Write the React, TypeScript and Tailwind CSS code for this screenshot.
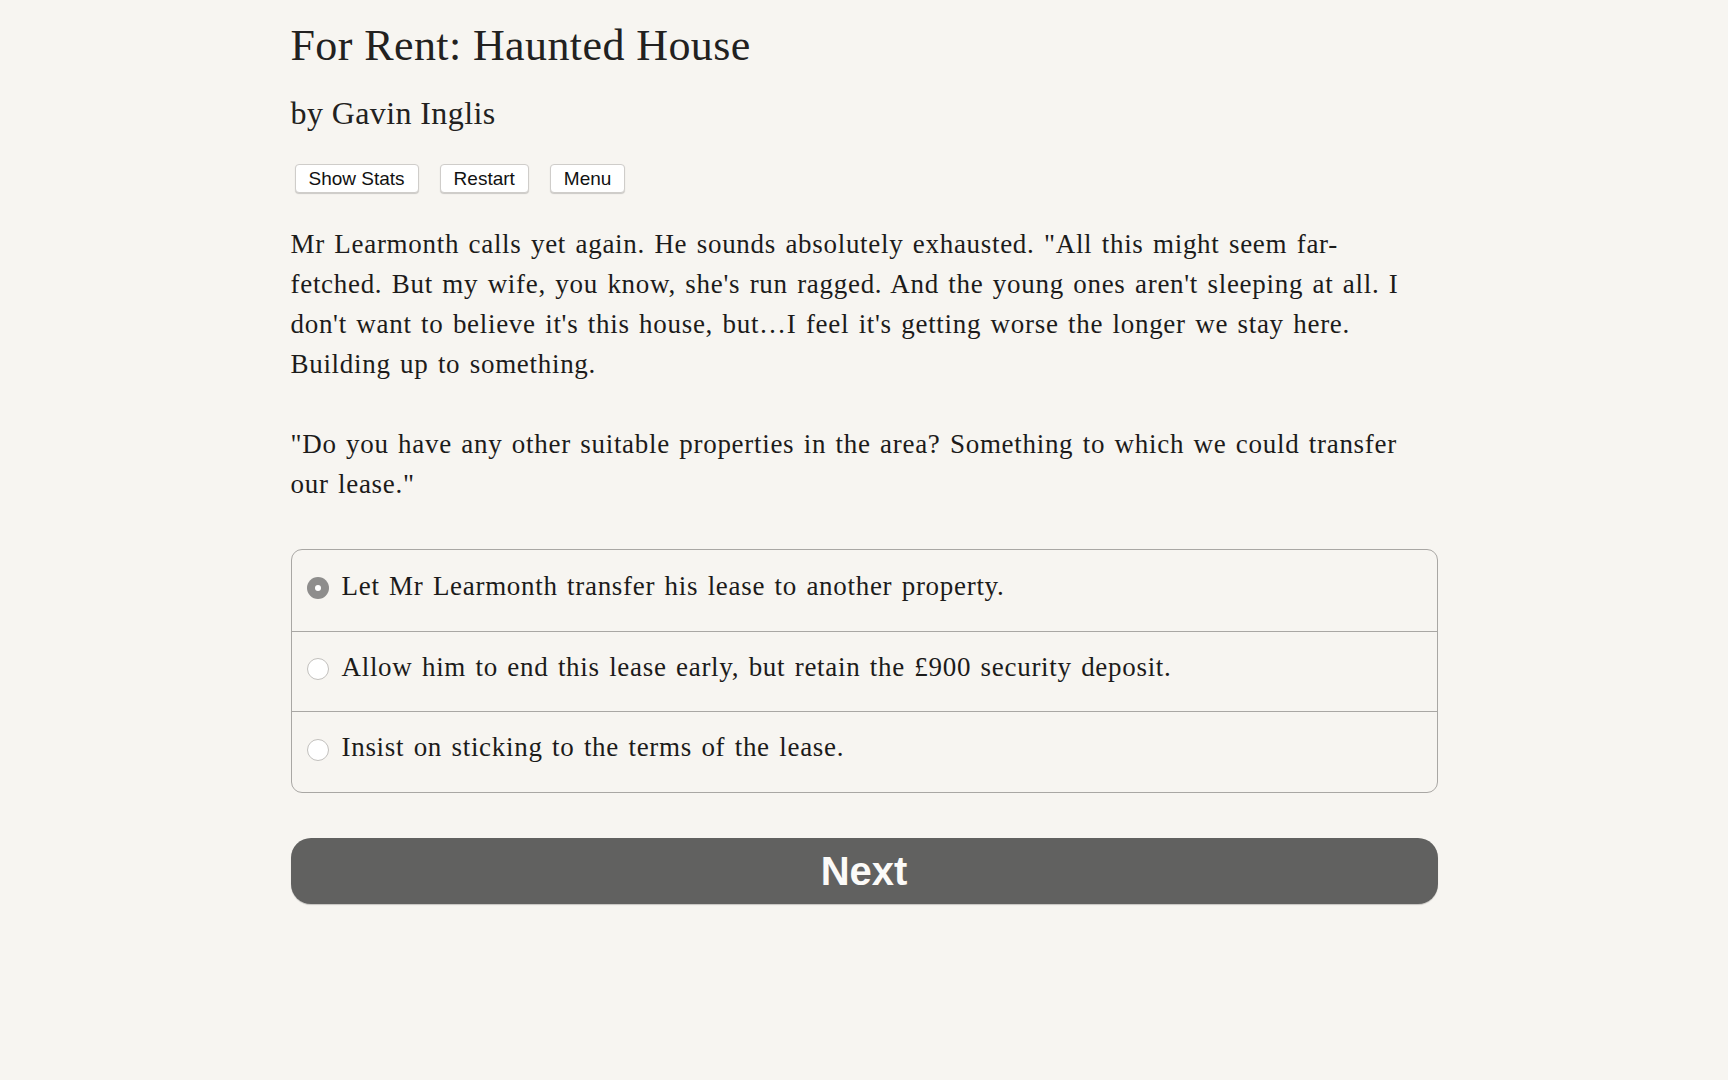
import React from "react";

const para1 = [
  "Mr Learmonth calls yet again. He sounds absolutely exhausted. \"All this might seem far-",
  "fetched. But my wife, you know, she's run ragged. And the young ones aren't sleeping at all. I",
  "don't want to believe it's this house, but\u2026I feel it's getting worse the longer we stay here.",
  "Building up to something.",
];

const para2 = [
  "\"Do you have any other suitable properties in the area? Something to which we could transfer",
  "our lease.\"",
];

const options = [
  "Let Mr Learmonth transfer his lease to another property.",
  "Allow him to end this lease early, but retain the \u00a3900 security deposit.",
  "Insist on sticking to the terms of the lease.",
];

function Lines({ lines }: { lines: string[] }) {
  return (
    <>
      {lines.map((l, i) => (
        <span key={i} className="block whitespace-nowrap">
          {l}
        </span>
      ))}
    </>
  );
}

export default function App() {
  return (
    <div className="min-h-screen bg-[#f7f5f1] text-[#1c1b1a] font-['Liberation_Serif',serif]">
      <div className="mx-auto w-[1147px] pt-[20px]">
        <h1 className="text-[44px] leading-[52px] tracking-[0.4px] text-[#222120]">
          For Rent: Haunted House
        </h1>
        <h2 className="mt-[21px] text-[32px] leading-[40px] tracking-[0.4px] text-[#222120]">
          by Gavin Inglis
        </h2>
        <div className="mt-[31px] flex gap-[21px] pl-[4px] font-['Liberation_Sans',sans-serif]">
          {["Show Stats", "Restart", "Menu"].map((b) => (
            <button
              key={b}
              className="h-[29px] rounded-[4px] border border-[#cfcdca] bg-white px-[13px] text-[19px] leading-[27px] text-[#111] shadow-[0_1px_1px_rgba(0,0,0,0.18)]"
            >
              {b}
            </button>
          ))}
        </div>
        <div className="mt-[31px] text-[27px] leading-[40px] tracking-[0.7px] [word-spacing:2px]">
          <p>
            <Lines lines={para1} />
          </p>
          <p className="mt-[40px]">
            <Lines lines={para2} />
          </p>
        </div>
        <div className="mt-[45px] overflow-hidden rounded-[11px] border-[1.5px] border-[#a9a7a4]">
          {options.map((o, i) => (
            <div
              key={i}
              className={
                "flex h-[80.5px] items-center gap-[13px] pb-[4px] pl-[15px] text-[27px] tracking-[0.7px] [word-spacing:2px] " +
                (i > 0 ? "border-t-[1.5px] border-[#a9a7a4]" : "")
              }
            >
              {i === 0 ? (
                <span className="flex h-[22px] w-[22px] shrink-0 items-center justify-center rounded-full bg-[#8e8d8c]">
                  <span className="h-[6px] w-[6px] rounded-full bg-white" />
                </span>
              ) : (
                <span className="h-[22px] w-[22px] shrink-0 rounded-full border border-[#c2c0bd] bg-white" />
              )}
              <span className="mb-[5px]">{o}</span>
            </div>
          ))}
        </div>
        <button className="mt-[45px] flex h-[66px] w-full items-center justify-center rounded-[20px] bg-[#616160] font-['Liberation_Sans',sans-serif] text-[40px] font-bold text-[#fbfaf8] shadow-[0_1px_1px_rgba(0,0,0,0.2)]">
          Next
        </button>
      </div>
    </div>
  );
}
